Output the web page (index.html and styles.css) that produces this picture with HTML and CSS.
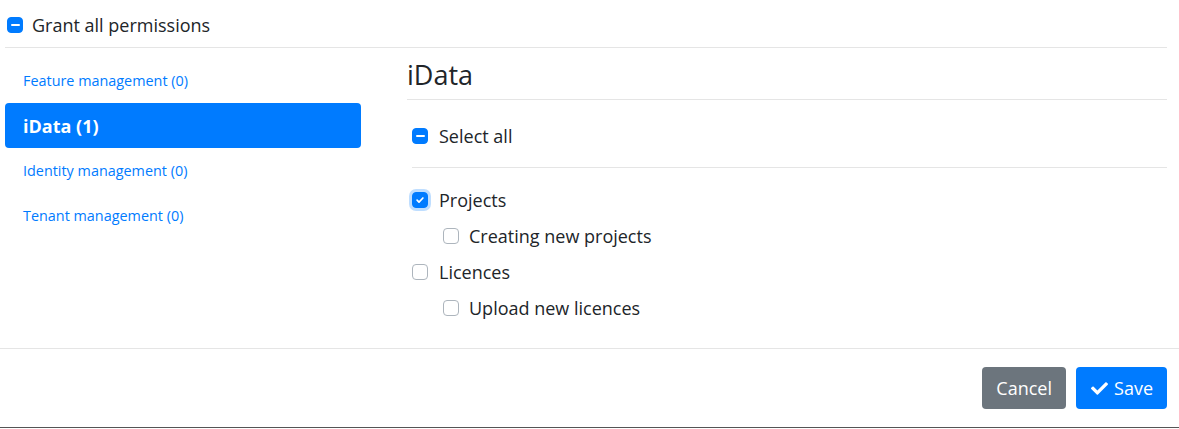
FILE: index.html
```html
<!DOCTYPE html>
<html lang="en">
<head>
  <meta charset="UTF-8" />
  <title>Permissions</title>
  <link rel="stylesheet" href="styles.css">
</head>
<body>
  <div class="modal-body">
    <!-- Grant all -->
    <div class="grant-all">
      <label class="check-row">
        <span class="box indeterminate"></span>
        <span>Grant all permissions</span>
      </label>
    </div>

    <div class="columns">
      <!-- Groups -->
      <ul class="nav-pills">
        <li><a href="#">Feature management (0)</a></li>
        <li class="active"><a href="#">iData (1)</a></li>
        <li><a href="#">Identity management (0)</a></li>
        <li><a href="#">Tenant management (0)</a></li>
      </ul>

      <!-- Permissions of the selected group -->
      <div class="group-pane">
        <h2 class="group-title">iData</h2>
        <div class="select-all">
          <label class="check-row">
            <span class="box indeterminate"></span>
            <span>Select all</span>
          </label>
        </div>
        <div class="perm-list">
          <label class="check-row">
            <span class="box checked focus">
              <svg viewBox="0 0 12 12" width="10" height="10"><path d="M2.5 6.2l2.3 2.3 4.7-4.9" fill="none" stroke="#fff" stroke-width="2" stroke-linecap="round" stroke-linejoin="round"/></svg>
            </span>
            <span>Projects</span>
          </label>
          <label class="check-row child">
            <span class="box"></span>
            <span>Creating new projects</span>
          </label>
          <label class="check-row">
            <span class="box"></span>
            <span>Licences</span>
          </label>
          <label class="check-row child">
            <span class="box"></span>
            <span>Upload new licences</span>
          </label>
        </div>
      </div>
    </div>
  </div>

  <div class="modal-footer">
    <button class="btn btn-secondary">Cancel</button>
    <button class="btn btn-primary">
      <svg viewBox="0 0 512 512" width="17" height="17"><path fill="#fff" d="M173.9 439.4L7.5 273c-10-10-10-26.2 0-36.2l36.2-36.2c10-10 26.2-10 36.2 0L192 312.7 432.1 72.6c10-10 26.2-10 36.2 0l36.2 36.2c10 10 10 26.2 0 36.2L210.1 439.4c-10 10-26.2 10-36.2 0z"/></svg>
      Save
    </button>
  </div>
</body>
</html>
```

FILE: styles.css
```css
* {
  box-sizing: border-box;
}

html, body {
  height: 100%;
}

body {
  margin: 0;
  font-family: "Open Sans", sans-serif;
  font-size: 18px;
  color: #212529;
  background: #fff;
  display: flex;
  flex-direction: column;
}

.modal-body {
  padding: 0 12px 0 5px;
  height: 348px;
}

/* Checkbox rows */
.check-row {
  display: flex;
  align-items: center;
  gap: 11px;
  height: 24px;
  line-height: 24px;
  cursor: pointer;
}

.box {
  width: 16px;
  height: 16px;
  border: 1px solid #adb5bd;
  border-radius: 4px;
  background: #fff;
  display: flex;
  align-items: center;
  justify-content: center;
  flex-shrink: 0;
}

.box.indeterminate,
.box.checked {
  background: #007bff;
  border-color: #007bff;
}

.box.indeterminate::after {
  content: "";
  width: 9px;
  height: 2px;
  background: #fff;
  border-radius: 1px;
}

.box.focus {
  box-shadow: 0 0 0 3px rgba(0, 123, 255, 0.25);
}

.grant-all {
  padding: 13px 0 10px 2px;
  border-bottom: 1px solid #e5e5e5;
}

.grant-all .check-row {
  gap: 9px;
}

.columns {
  display: flex;
  gap: 46px;
  padding-top: 10px;
}

/* Left nav */
.nav-pills {
  list-style: none;
  margin: 0;
  padding: 0;
  width: 356px;
  flex-shrink: 0;
}

.nav-pills li a {
  display: flex;
  align-items: center;
  height: 45px;
  padding: 0 18px;
  font-size: 14.4px;
  color: #007bff;
  text-decoration: none;
  border-radius: 4px;
}

.nav-pills li.active a {
  background: #007bff;
  color: #fff;
  font-weight: 700;
  font-size: 18px;
}

/* Right pane */
.group-pane {
  flex: 1;
}

.group-title {
  margin: 0;
  font-size: 27px;
  font-weight: 400;
  line-height: 34px;
  padding-bottom: 7px;
  border-bottom: 1px solid #e5e5e5;
}

.select-all {
  margin-left: 5px;
  padding: 24px 0 19px;
  border-bottom: 1px solid #e5e5e5;
}

.perm-list {
  margin-left: 5px;
  padding-top: 20px;
  display: flex;
  flex-direction: column;
  gap: 12px;
}

.check-row.child {
  margin-left: 31px;
  gap: 10px;
}

/* Footer */
.modal-footer {
  border-top: 1px solid #e5e5e5;
  border-bottom: 1px solid #555;
  height: 80px;
  padding: 18px 12px 0 0;
  display: flex;
  justify-content: flex-end;
  align-items: flex-start;
  gap: 10px;
}

.btn {
  height: 42px;
  padding: 0 14px;
  border: none;
  border-radius: 4px;
  font-family: "Open Sans", sans-serif;
  font-size: 18px;
  color: #fff;
  display: flex;
  align-items: center;
  gap: 6px;
  cursor: pointer;
}

.btn-secondary {
  background: #6c757d;
}

.btn-primary {
  background: #007bff;
  padding: 0 14px 0 15px;
}
```
